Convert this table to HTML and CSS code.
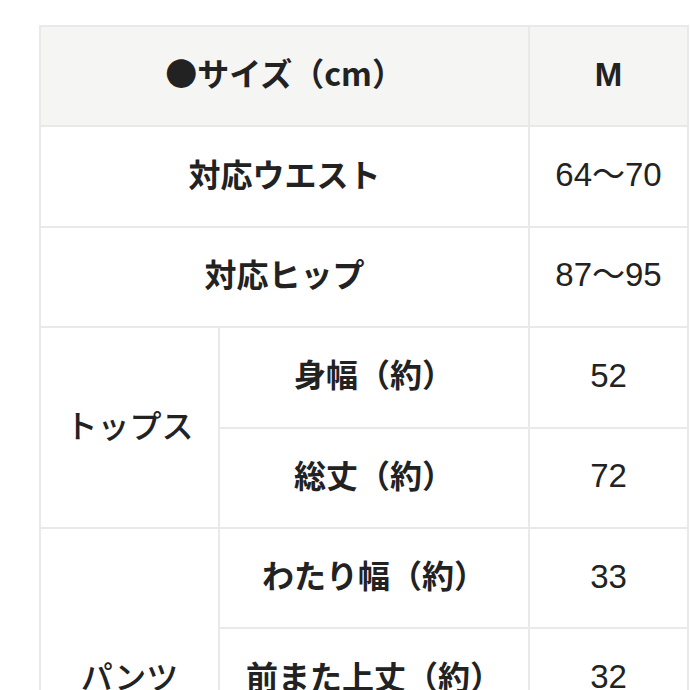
FILE: index.html
```html
<!DOCTYPE html>
<html lang="ja">
<head>
<meta charset="utf-8">
<link rel="stylesheet" href="styles.css">
</head>
<body>
<table class="size-table">
  <colgroup>
    <col class="col-group">
    <col class="col-label">
    <col class="col-val">
  </colgroup>
  <tr class="head">
    <th colspan="2" class="label">●サイズ（cm）</th>
    <th class="val">M</th>
  </tr>
  <tr>
    <td colspan="2" class="label">対応ウエスト</td>
    <td class="val">64〜70</td>
  </tr>
  <tr>
    <td colspan="2" class="label">対応ヒップ</td>
    <td class="val">87〜95</td>
  </tr>
  <tr>
    <td rowspan="2" class="group">トップス</td>
    <td class="label">身幅（約）</td>
    <td class="val">52</td>
  </tr>
  <tr>
    <td class="label">総丈（約）</td>
    <td class="val">72</td>
  </tr>
  <tr>
    <td rowspan="3" class="group">パンツ</td>
    <td class="label">わたり幅（約）</td>
    <td class="val">33</td>
  </tr>
  <tr>
    <td class="label">前また上丈（約）</td>
    <td class="val">32</td>
  </tr>
  <tr>
    <td class="label">股下（約）</td>
    <td class="val">70</td>
  </tr>
</table>
</body>
</html>
```

FILE: styles.css
```css
html, body {
  margin: 0;
  padding: 0;
  background: #ffffff;
  overflow: hidden;
}
body {
  padding: 25px 0 0 39px;
  font-family: "Liberation Sans", "Noto Sans CJK JP", sans-serif;
  color: #222222;
}
.size-table {
  border-collapse: collapse;
  table-layout: fixed;
  width: 648px;
}
.col-group { width: 179px; }
.col-label { width: 310px; }
.col-val { width: 159px; }
.size-table th,
.size-table td {
  border: 2px solid #e9e9e9;
  padding: 0;
  text-align: center;
  vertical-align: middle;
  font-size: 32px;
  line-height: 1;
}
.head th {
  background: #f5f5f3;
  font-weight: 700;
}
.size-table .label {
  font-weight: 700;
  font-family: "Noto Sans CJK JP", sans-serif;
  height: 90.4px;
  padding-bottom: 8px;
}
.size-table .group {
  font-weight: 500;
  font-family: "Noto Sans CJK JP", sans-serif;
  padding-bottom: 8px;
}
.size-table .val {
  font-weight: 400;
  font-size: 33px;
  height: 94.4px;
  padding-bottom: 4px;
}
.head th.val {
  font-weight: 700;
}
```
